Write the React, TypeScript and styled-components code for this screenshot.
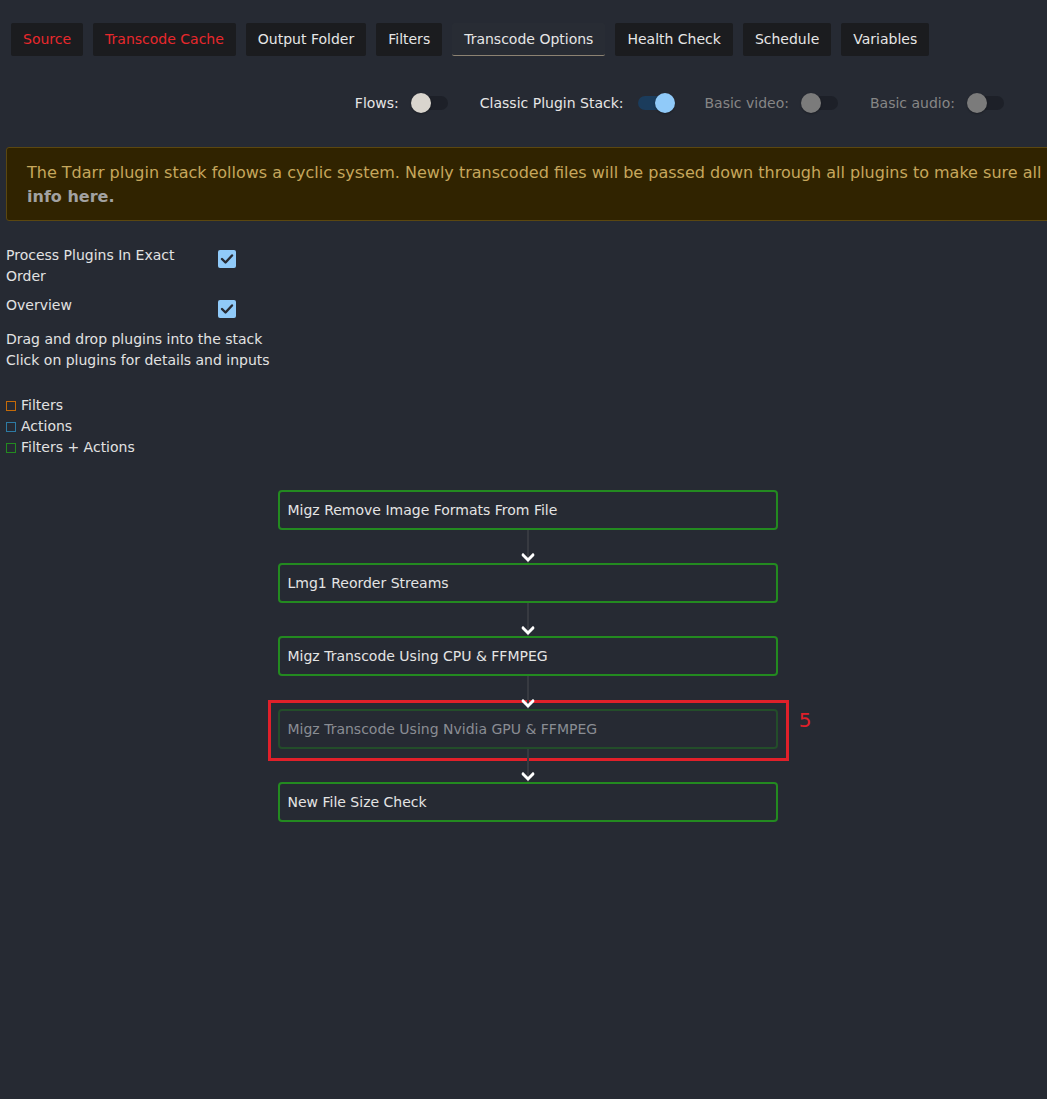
import React from "react";
import styled, { createGlobalStyle } from "styled-components";

const Global = createGlobalStyle`
  html, body {
    margin: 0;
    padding: 0;
    background: #262a33;
    overflow-x: hidden;
  }
  body {
    font-family: "DejaVu Sans", "Liberation Sans", sans-serif;
    color: #e2e2e2;
  }
`;

const Page = styled.div`
  min-height: 1099px;
  padding: 0 0 0 6px;
  overflow: hidden;
`;

const TabBar = styled.div`
  display: flex;
  gap: 10px;
  padding: 23px 0 0 5px;
`;

const Tab = styled.div<{ $red?: boolean; $active?: boolean }>`
  height: 33px;
  padding: 0 12px 1px;
  display: flex;
  align-items: center;
  font-size: 14px;
  color: ${(p) => (p.$red ? "#e8282c" : "#e6e6e6")};
  background: ${(p) => (p.$active ? "#282c34" : "#1b1c1f")};
  border-radius: 2px;
  box-sizing: border-box;
  border-bottom: ${(p) => (p.$active ? "1.5px solid #8c8272" : "none")};
`;

const ToggleRow = styled.div`
  display: flex;
  justify-content: flex-end;
  align-items: center;
  gap: 20px;
  padding-right: 31px;
  margin-top: 28px;
  height: 38px;
`;

const ToggleGroup = styled.div`
  display: flex;
  align-items: center;
  gap: 3px;
`;

const ToggleLabel = styled.span<{ $disabled?: boolean }>`
  font-size: 14px;
  color: ${(p) => (p.$disabled ? "#868686" : "#e6e6e6")};
`;

const SwitchRoot = styled.span`
  position: relative;
  display: inline-block;
  width: 58px;
  height: 38px;
`;

const SwitchTrack = styled.span<{ $checked?: boolean }>`
  position: absolute;
  left: 12px;
  top: 12px;
  width: 34px;
  height: 14px;
  border-radius: 7px;
  background: ${(p) => (p.$checked ? "#1b3c5c" : "#1d2028")};
`;

const SwitchKnob = styled.span<{ $checked?: boolean; $disabled?: boolean }>`
  position: absolute;
  top: 9px;
  left: ${(p) => (p.$checked ? "29px" : "9px")};
  width: 20px;
  height: 20px;
  border-radius: 50%;
  background: ${(p) =>
    p.$disabled ? "#7b7b7b" : p.$checked ? "#90caf9" : "#d9d5ce"};
  box-shadow: 0 1px 2px rgba(0, 0, 0, 0.3);
`;

const Switch = ({ checked, disabled }: { checked?: boolean; disabled?: boolean }) => (
  <SwitchRoot>
    <SwitchTrack $checked={checked} />
    <SwitchKnob $checked={checked} $disabled={disabled} />
  </SwitchRoot>
);

const Banner = styled.div`
  margin-top: 25px;
  width: 1300px;
  box-sizing: border-box;
  background: #302300;
  border: 1px solid #5b4710;
  border-radius: 3px;
  padding: 13px 20px 11px;
  font-size: 16px;
  line-height: 24px;
  color: #c6a75c;
  white-space: nowrap;
`;

const BannerLink = styled.b`
  color: #a2a2a2;
  font-weight: bold;
`;

const Options = styled.div`
  margin-top: 24px;
  display: flex;
  flex-direction: column;
  gap: 8px;
  font-size: 14px;
  line-height: 21px;
`;

const OptionRow = styled.div`
  display: flex;
  align-items: flex-start;
`;

const OptionLabel = styled.div`
  width: 212px;
  padding-right: 36px;
  box-sizing: border-box;
`;

const CheckBox = styled.span`
  margin-top: 5px;
  width: 18px;
  height: 18px;
  border-radius: 2px;
  background: #90caf9;
  display: flex;
  align-items: center;
  justify-content: center;
`;

const Hint = styled.div`
  margin-top: 11px;
  font-size: 14px;
  line-height: 21px;
`;

const Legend = styled.div`
  margin-top: 24px;
  display: flex;
  flex-direction: column;
  font-size: 14px;
  line-height: 21px;
`;

const LegendItem = styled.div`
  display: flex;
  align-items: center;
  gap: 5px;
`;

const LegendSquare = styled.span<{ $color: string }>`
  width: 10px;
  height: 10px;
  box-sizing: border-box;
  border: 1px solid ${(p) => p.$color};
  margin-top: 1px;
`;

const Stack = styled.div`
  margin-top: 32px;
  padding-left: 2px;
  display: flex;
  flex-direction: column;
  align-items: center;
`;

const StackItem = styled.div`
  position: relative;
  width: 500px;
  display: flex;
  flex-direction: column;
`;

const Connector = styled.div`
  position: relative;
  height: 33px;
  z-index: 2;
  display: flex;
  justify-content: center;
`;

const ConnectorLine = styled.span`
  width: 2px;
  height: 100%;
  background: #373a41;
`;

const ChevronWrap = styled.span`
  position: absolute;
  bottom: 0;
  left: 50%;
  transform: translateX(-50%);
  width: 13px;
  height: 10px;
  display: flex;
`;

const PluginBox = styled.div<{ $disabled?: boolean }>`
  height: 40px;
  box-sizing: border-box;
  border: 2px solid ${(p) => (p.$disabled ? "#234d2a" : "#238a20")};
  border-radius: 4px;
  padding: 0 8px;
  display: flex;
  align-items: center;
  font-size: 14px;
  color: ${(p) => (p.$disabled ? "#8a8d93" : "#e4e4e4")};
  position: relative;
  z-index: 1;
`;

const Highlight = styled.div`
  position: absolute;
  left: -10px;
  right: -11px;
  bottom: -12px;
  height: 61px;
  border: 3px solid #e0202a;
  box-sizing: border-box;
  z-index: 1;
  pointer-events: none;
`;

const HighlightNumber = styled.span`
  position: absolute;
  right: -26px;
  bottom: 26px;
  font-size: 20px;
  color: #e0202a;
`;

const Chevron = () => (
  <svg width="13" height="10" viewBox="0 0 13 10">
    <polyline
      points="1.5,2 6.5,7 11.5,2"
      fill="none"
      stroke="#ffffff"
      strokeWidth="3"
      strokeLinecap="square"
    />
  </svg>
);

const Check = () => (
  <svg width="14" height="14" viewBox="0 0 14 14">
    <polyline
      points="2,7 5.5,10.5 12,3.5"
      fill="none"
      stroke="#262a33"
      strokeWidth="2.4"
      strokeLinecap="round"
      strokeLinejoin="round"
    />
  </svg>
);

const tabs = [
  { label: "Source", red: true },
  { label: "Transcode Cache", red: true },
  { label: "Output Folder" },
  { label: "Filters" },
  { label: "Transcode Options", active: true },
  { label: "Health Check" },
  { label: "Schedule" },
  { label: "Variables" },
];

const plugins = [
  { name: "Migz Remove Image Formats From File" },
  { name: "Lmg1 Reorder Streams" },
  { name: "Migz Transcode Using CPU & FFMPEG" },
  { name: "Migz Transcode Using Nvidia GPU & FFMPEG", disabled: true, mark: "5" },
  { name: "New File Size Check" },
];

export default function App() {
  return (
    <>
      <Global />
      <Page>
        <TabBar>
          {tabs.map((t) => (
            <Tab key={t.label} $red={t.red} $active={t.active}>
              {t.label}
            </Tab>
          ))}
        </TabBar>

        <ToggleRow>
          <ToggleGroup>
            <ToggleLabel>Flows:</ToggleLabel>
            <Switch />
          </ToggleGroup>
          <ToggleGroup>
            <ToggleLabel>Classic Plugin Stack:</ToggleLabel>
            <Switch checked />
          </ToggleGroup>
          <ToggleGroup>
            <ToggleLabel $disabled>Basic video:</ToggleLabel>
            <Switch disabled />
          </ToggleGroup>
          <ToggleGroup>
            <ToggleLabel $disabled>Basic audio:</ToggleLabel>
            <Switch disabled />
          </ToggleGroup>
        </ToggleRow>

        <Banner>
          The Tdarr plugin stack follows a cyclic system. Newly transcoded files will be passed down through all plugins to make sure all conditions are met. More
          <br />
          <BannerLink>info here.</BannerLink>
        </Banner>

        <Options>
          <OptionRow>
            <OptionLabel>Process Plugins In Exact Order</OptionLabel>
            <CheckBox>
              <Check />
            </CheckBox>
          </OptionRow>
          <OptionRow>
            <OptionLabel>Overview</OptionLabel>
            <CheckBox>
              <Check />
            </CheckBox>
          </OptionRow>
        </Options>

        <Hint>
          Drag and drop plugins into the stack
          <br />
          Click on plugins for details and inputs
        </Hint>

        <Legend>
          <LegendItem>
            <LegendSquare $color="#c46a08" />
            Filters
          </LegendItem>
          <LegendItem>
            <LegendSquare $color="#2d7aa3" />
            Actions
          </LegendItem>
          <LegendItem>
            <LegendSquare $color="#238a20" />
            Filters + Actions
          </LegendItem>
        </Legend>

        <Stack>
          {plugins.map((p, i) => (
            <StackItem key={p.name}>
              {i > 0 && (
                <Connector>
                  <ConnectorLine />
                  <ChevronWrap>
                    <Chevron />
                  </ChevronWrap>
                </Connector>
              )}
              <PluginBox $disabled={p.disabled}>{p.name}</PluginBox>
              {p.mark && (
                <Highlight>
                  <HighlightNumber>{p.mark}</HighlightNumber>
                </Highlight>
              )}
            </StackItem>
          ))}
        </Stack>
      </Page>
    </>
  );
}
